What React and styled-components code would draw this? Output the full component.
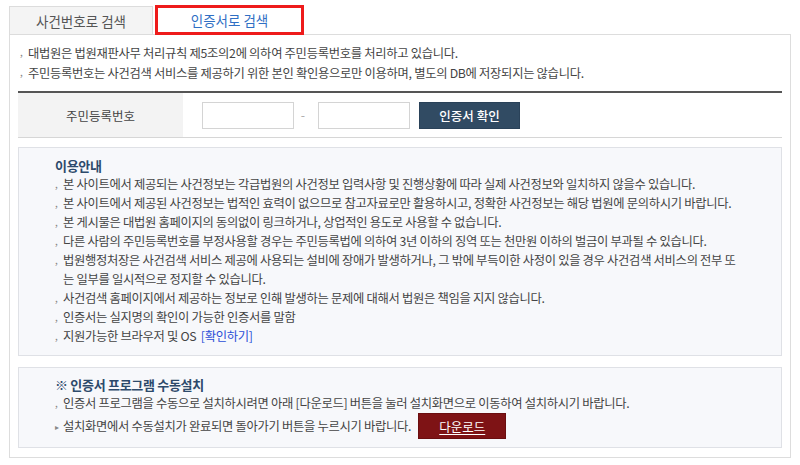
import React from "react";
import styled, { createGlobalStyle } from "styled-components";

const GlobalStyle = createGlobalStyle`
  html, body {
    margin: 0;
    padding: 0;
    background: #ffffff;
  }
  body {
    font-family: "Noto Sans CJK KR", "Noto Sans", sans-serif;
    font-size: 12.3px;
    color: #444444;
  }
`;

const notices = [
  "대법원은 법원재판사무 처리규칙 제5조의2에 의하여 주민등록번호를 처리하고 있습니다.",
  "주민등록번호는 사건검색 서비스를 제공하기 위한 본인 확인용으로만 이용하며, 별도의 DB에 저장되지는 않습니다.",
];

const guides = [
  "본 사이트에서 제공되는 사건정보는 각급법원의 사건정보 입력사항 및 진행상황에 따라 실제 사건정보와 일치하지 않을수 있습니다.",
  "본 사이트에서 제공된 사건정보는 법적인 효력이 없으므로 참고자료로만 활용하시고, 정확한 사건정보는 해당 법원에 문의하시기 바랍니다.",
  "본 게시물은 대법원 홈페이지의 동의없이 링크하거나, 상업적인 용도로 사용할 수 없습니다.",
  "다른 사람의 주민등록번호를 부정사용할 경우는 주민등록법에 의하여 3년 이하의 징역 또는 천만원 이하의 벌금이 부과될 수 있습니다.",
];

const App = () => {
  return (
    <Page>
      <GlobalStyle />
      <Tabs>
        <Tab>사건번호로 검색</Tab>
        <Tab active>인증서로 검색</Tab>
      </Tabs>
      <Panel>
        <NoticeList>
          {notices.map((text) => (
            <NoticeItem key={text}>
              <Mark>,</Mark>
              <span>{text}</span>
            </NoticeItem>
          ))}
        </NoticeList>

        <FormRow>
          <Label>주민등록번호</Label>
          <Field>
            <Input type="text" />
            <Dash>-</Dash>
            <Input type="text" />
            <NavyButton>인증서 확인</NavyButton>
          </Field>
        </FormRow>

        <InfoBox>
          <InfoTitle>이용안내</InfoTitle>
          {guides.map((text) => (
            <InfoItem key={text}>
              <Mark>,</Mark>
              <span>{text}</span>
            </InfoItem>
          ))}
          <InfoItem>
            <Mark>,</Mark>
            <span>
              법원행정처장은 사건검색 서비스 제공에 사용되는 설비에 장애가 발생하거나, 그 밖에 부득이한 사정이 있을 경우 사건검색 서비스의 전부 또
              <br />는 일부를 일시적으로 정지할 수 있습니다.
            </span>
          </InfoItem>
          <InfoItem>
            <Mark>,</Mark>
            <span>사건검색 홈페이지에서 제공하는 정보로 인해 발생하는 문제에 대해서 법원은 책임을 지지 않습니다.</span>
          </InfoItem>
          <InfoItem>
            <Mark>,</Mark>
            <span>인증서는 실지명의 확인이 가능한 인증서를 말함</span>
          </InfoItem>
          <InfoItem>
            <Mark>,</Mark>
            <span>
              지원가능한 브라우저 및 OS <Link>[확인하기]</Link>
            </span>
          </InfoItem>
        </InfoBox>

        <InstallBox>
          <InfoTitle>※ 인증서 프로그램 수동설치</InfoTitle>
          <InfoItem>
            <Mark>,</Mark>
            <span>인증서 프로그램을 수동으로 설치하시려면 아래 [다운로드] 버튼을 눌러 설치화면으로 이동하여 설치하시기 바랍니다.</span>
          </InfoItem>
          <ButtonLine>
            <Arrow>▸</Arrow>
            <span>설치화면에서 수동설치가 완료되면 돌아가기 버튼을 누르시기 바랍니다.</span>
            <RedButton>다운로드</RedButton>
          </ButtonLine>
        </InstallBox>
      </Panel>
    </Page>
  );
};

const Page = styled.div`
  padding: 5px 9px 0 9px;
  width: 782px;
`;

const Tabs = styled.div`
  display: flex;
  align-items: flex-end;
  height: 30px;
  margin-bottom: -1px;
`;

const Tab = styled.div`
  display: flex;
  align-items: center;
  justify-content: center;
  box-sizing: border-box;
  font-size: 13.5px;
  cursor: pointer;
  ${({ active }) =>
    active
      ? `
    width: 149px;
    height: 30px;
    margin-left: 2px;
    border: 3px solid #ee1b1b;
    background: #ffffff;
    color: #2f6fc4;
  `
      : `
    width: 144px;
    height: 29px;
    border: 1px solid #dcdcdc;
    background: #f4f4f4;
    color: #555555;
  `}
`;

const Panel = styled.div`
  border: 1px solid #dddddd;
  padding: 8px 8px 9px 8px;
`;

const NoticeList = styled.div`
  display: flex;
  flex-direction: column;
`;

const NoticeItem = styled.div`
  display: flex;
  line-height: 20px;
  letter-spacing: -0.3px;
`;

const Mark = styled.span`
  flex: 0 0 10px;
  width: 10px;
  color: #888888;
  font-size: 10px;
  line-height: inherit;
  position: relative;
  top: -1px;
  padding-left: 2px;
  box-sizing: border-box;
`;

const FormRow = styled.div`
  display: flex;
  margin-top: 8px;
  border-top: 2px solid #555555;
  border-bottom: 1px solid #d6d6d6;
  height: 44px;
`;

const Label = styled.div`
  width: 165px;
  background: #f3f3f3;
  display: flex;
  align-items: center;
  justify-content: center;
  font-size: 12.5px;
  color: #444444;
`;

const Field = styled.div`
  display: flex;
  align-items: center;
  padding-left: 19px;
`;

const Input = styled.input`
  width: 92px;
  height: 27px;
  box-sizing: border-box;
  border: 1px solid #d4d4d4;
  background: #ffffff;
  outline: none;
  margin: 0;
`;

const Dash = styled.span`
  width: 24px;
  text-align: center;
  color: #aaaaaa;
  position: relative;
  left: -3px;
`;

const NavyButton = styled.button`
  margin-left: 9px;
  width: 101px;
  height: 27px;
  border: 1px solid #2a4259;
  background: #314b63;
  color: #ffffff;
  font-family: inherit;
  font-size: 12.5px;
  font-weight: 500;
  cursor: pointer;
  padding: 0;
`;

const InfoBox = styled.div`
  margin-top: 9px;
  border: 1px solid #dfe1e6;
  background: #f7f8fb;
  padding: 8px 10px 9px 36px;
`;

const InstallBox = styled(InfoBox)`
  margin-top: 11px;
  padding-top: 7px;
  padding-bottom: 8px;
`;

const InfoTitle = styled.div`
  font-size: 13px;
  font-weight: bold;
  color: #2d4a6b;
  line-height: 19px;
  letter-spacing: -0.3px;
`;

const InfoItem = styled.div`
  display: flex;
  line-height: 19px;
  letter-spacing: -0.3px;
  & > ${Mark} {
    flex: 0 0 8px;
    width: 8px;
    padding-left: 0;
  }
`;

const Link = styled.a`
  color: #2b4fd8;
  margin-left: 2px;
  cursor: pointer;
`;

const ButtonLine = styled.div`
  display: flex;
  align-items: center;
  letter-spacing: -0.3px;
`;

const Arrow = styled.span`
  flex: 0 0 8px;
  font-size: 8px;
  color: #888888;
`;

const RedButton = styled.button`
  margin-left: 7px;
  width: 88px;
  height: 26px;
  border: 1px solid #6a0e10;
  background: #7e1315;
  color: #ffffff;
  font-family: inherit;
  font-size: 12.5px;
  text-decoration: underline;
  text-underline-offset: 2px;
  cursor: pointer;
  padding: 0;
`;

export default App;
